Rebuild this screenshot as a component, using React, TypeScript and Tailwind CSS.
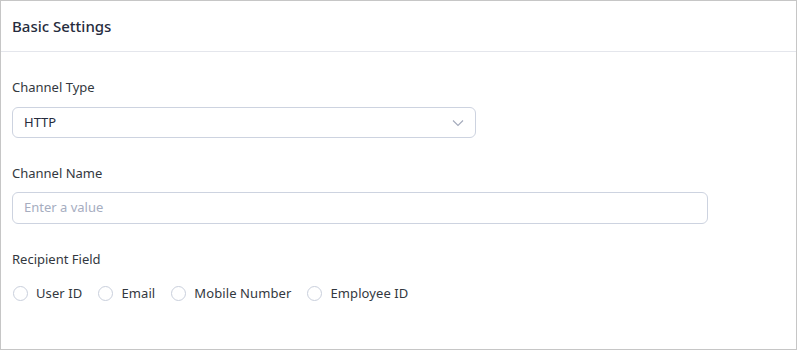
import React from "react";

export default function App() {
  const radios = ["User ID", "Email", "Mobile Number", "Employee ID"];
  return (
    <div
      className="w-[797px] h-[350px] bg-white border border-[#c6c6c6] flex flex-col"
      style={{ fontFamily: '"Noto Sans", "Open Sans", sans-serif' }}
    >
      <div className="h-[51px] border-b border-[#e4e6ec] flex items-center px-[11px]">
        <span className="text-[15px] font-medium text-[#262c3d]">Basic Settings</span>
      </div>
      <div className="flex flex-col px-[11px] pt-[25px]">
        <label className="text-[13px] text-[#333840] leading-[20px]">Channel Type</label>
        <div className="mt-[10px] w-[464px] h-[31px] border border-[#cdd3e0] rounded-[6px] flex items-center justify-between pl-[11px] pr-[11px]">
          <span className="text-[13px] text-[#262c3d]">HTTP</span>
          <svg width="12" height="8" viewBox="0 0 12 8" fill="none">
            <path d="M1 1.5 L6 6.5 L11 1.5" stroke="#a3aabb" strokeWidth="1.1" />
          </svg>
        </div>
        <label className="mt-[25px] text-[13px] text-[#333840] leading-[20px]">Channel Name</label>
        <div className="mt-[9px] w-[696px] h-[32px] border border-[#cdd3e0] rounded-[6px] flex items-center pl-[11px]">
          <span className="text-[13px] text-[#a6adbf]">Enter a value</span>
        </div>
        <label className="mt-[25px] text-[13px] text-[#333840] leading-[20px]">Recipient Field</label>
        <div className="mt-[15px] flex items-center gap-[16px] pl-[1px]">
          {radios.map((r) => (
            <div key={r} className="flex items-center gap-[8px]">
              <span className="w-[15px] h-[15px] rounded-full border border-[#c9cfdc] bg-white" />
              <span className="text-[13px] text-[#333840] tracking-[0.1px]">{r}</span>
            </div>
          ))}
        </div>
      </div>
    </div>
  );
}
